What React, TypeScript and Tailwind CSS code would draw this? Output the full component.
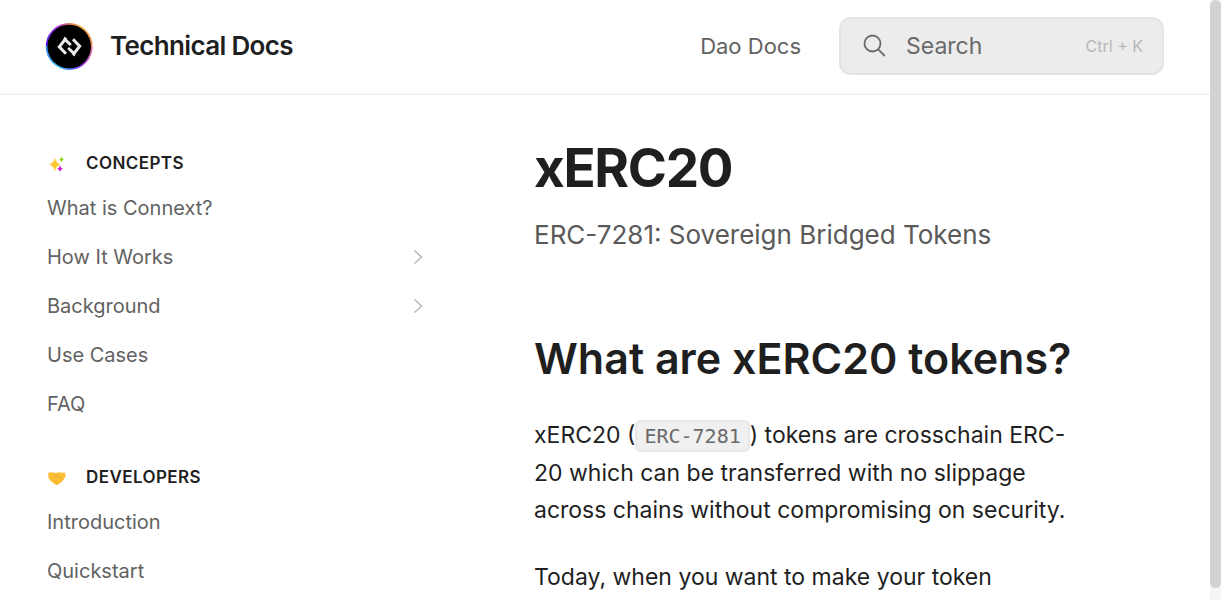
import React from "react";

type NavItem = { label: string; expandable?: boolean };

const concepts: NavItem[] = [
  { label: "What is Connext?" },
  { label: "How It Works", expandable: true },
  { label: "Background", expandable: true },
  { label: "Use Cases" },
  { label: "FAQ" },
];

const developers: NavItem[] = [{ label: "Introduction" }, { label: "Quickstart" }];

function Logo() {
  return (
    <svg viewBox="0 0 48 48" className="size-12 shrink-0" aria-hidden="true">
      <defs>
        <linearGradient id="ringTop" x1="0" y1="0" x2="1" y2="0">
          <stop offset="0" stopColor="#5a1cf0" />
          <stop offset="0.3" stopColor="#b03bd0" />
          <stop offset="0.5" stopColor="#e0784e" />
          <stop offset="0.75" stopColor="#f7b04a" />
          <stop offset="1" stopColor="#f08a5a" />
        </linearGradient>
        <linearGradient id="ringBottom" x1="0" y1="0" x2="1" y2="0">
          <stop offset="0" stopColor="#3d8bff" />
          <stop offset="0.25" stopColor="#45c4f5" />
          <stop offset="0.5" stopColor="#3f7df5" />
          <stop offset="0.75" stopColor="#8a25f5" />
          <stop offset="1" stopColor="#e27aa0" />
        </linearGradient>
      </defs>
      <path d="M.7 24.500a23.500 23.500 0 0 1 47 0z" fill="url(#ringTop)" />
      <path d="M.7 24.500a23.500 23.500 0 0 0 47 0z" fill="url(#ringBottom)" />
      <circle cx="24.200" cy="24.500" r="21.800" fill="#000" />
      <g transform="translate(.5 .5)">
        <g fill="none" stroke="#e9e9e9" strokeWidth="3">
          <path d="M20.500 31.300 13.800 24.300l5.700-7.300 5.800 5.500" />
          <path d="M27.500 16.700l6.700 7-5.700 7.300-5.800-5.500" />
        </g>
        <path d="M19 14l2.500 2-1 2.500-3-.5zM29 34l-2.500-2 1-2.500 3 .5z" fill="#e9e9e9" />
      </g>
    </svg>
  );
}

function Sparkles() {
  return (
    <svg viewBox="0 0 20 20" className="size-5" aria-hidden="true">
      <path d="M8 4.500Q8.800 9.200 13 10.500 8.800 12 8 16.500 7 12 2.800 10.500 7 9.200 8 4.500z" fill="#fdc72e" stroke="#fdc72e" strokeWidth=".5" />
      <path d="M14.500 2.500Q15 5 17.300 5.500 15 6.200 14.500 8.500 13.800 6.200 11.800 5.500 13.800 5 14.500 2.500z" fill="#8bd61c" />
      <path d="M13 11.500Q13.600 14.200 16 14.700 13.600 15.300 13 17.700 12.400 15.300 10 14.700 12.400 14.200 13 11.500z" fill="#cc18ca" />
    </svg>
  );
}

function Handshake() {
  return (
    <svg viewBox="0 0 20 20" className="size-5" aria-hidden="true">
      <path d="M1.200 4.800 4.800 4.300l4 .8 3.500-.9 3 .6 2.800-.3.500 3.800-1.800 3-2.600 3.200-4 2.500-2.300-.7-3.700-3-2.700-3z" fill="#fbbe35" />
      <path d="M9.500 5.500 7.200 8.300l1.300.9 2.500-1.200 4.600 3.800M5.500 12.500l1.700-1.500M7.500 14.300l1.500-1.700M9.500 15.800l1-1.800" fill="none" stroke="#e09a30" strokeWidth=".7" />
    </svg>
  );
}

function NavGroup({ title, icon, items }: { title: string; icon: React.ReactNode; items: NavItem[] }) {
  return (
    <section>
      <h2 className="flex h-5 items-center gap-[19px] text-[17px] font-semibold tracking-wide text-[#1f1f1f]">
        {icon}
        {title}
      </h2>
      <ul className="pt-[9px]">
        {items.map((item) => (
          <li key={item.label}>
            <a href="#" className="flex h-[49px] items-center justify-between pr-[7px] text-[20px] text-[#626262]">
              {item.label}
              {item.expandable && (
                <svg viewBox="0 0 10 16" className="h-4 w-2.5" fill="none" stroke="#b8b8b8" strokeWidth="1.5" aria-hidden="true">
                  <path d="M1.500 1.500 8.500 8l-7 6.500" />
                </svg>
              )}
            </a>
          </li>
        ))}
      </ul>
    </section>
  );
}

export default function App() {
  return (
    <div className="flex h-screen overflow-hidden bg-white font-['Inter',sans-serif] text-[#1f1f1f]">
      <div className="min-w-0 flex-1">
        <header className="flex items-center border-b-2 border-[#f2f2f2] pt-[17px] pr-[46px] pb-[18px] pl-[45px]">
          <a href="#" className="flex items-center gap-[17px] text-[26px] leading-8 font-semibold tracking-tight">
            <Logo />
            Technical Docs
          </a>
          <a href="#" className="ml-auto text-[22px] text-[#626262]">
            Dao Docs
          </a>
          <button type="button" className="ml-[38px] flex h-[58px] w-[325px] items-center rounded-xl border-2 border-[#e4e4e4] bg-[#ececec] pr-[19px] pl-[22px] text-[23px] text-[#6a6a6a]">
            <svg viewBox="0 0 24 24" className="size-6" fill="none" stroke="currentColor" strokeWidth="1.800" aria-hidden="true">
              <circle cx="9.500" cy="9.500" r="8" />
              <path d="m15.300 15.300 6.500 6.700" />
            </svg>
            <span className="ml-[19px]">Search</span>
            <kbd className="ml-auto font-['Inter',sans-serif] text-[16px] text-[#b8b8b8]">Ctrl + K</kbd>
          </button>
        </header>
        <div className="flex">
          <nav aria-label="Documentation" className="flex w-[430px] shrink-0 flex-col gap-10 pt-[59px] pl-[47px]">
            <NavGroup title="CONCEPTS" icon={<Sparkles />} items={concepts} />
            <NavGroup title="DEVELOPERS" icon={<Handshake />} items={developers} />
          </nav>
          <main className="min-w-0 flex-1 pt-[40px] pr-[142px] pl-[104px]">
            <h1 className="text-[53px] leading-[66px] font-bold tracking-tight">xERC20</h1>
            <p className="mt-[15px] text-[26px] leading-[38px] text-[#5a5a5a]">ERC-7281: Sovereign Bridged Tokens</p>
            <h2 className="mt-[75px] text-[43px] leading-[58px] font-semibold whitespace-nowrap">What are xERC20 tokens?</h2>
            <p className="mt-[30px] text-[23px] leading-[37px]">
              xERC20 (
              <code className="rounded-md border-2 border-[#e8e8e8] bg-[#f0f0f0] px-[7px] py-[2px] font-['DejaVu_Sans_Mono',monospace] text-[20px] text-[#6a6a6a]">ERC-7281</code>
              ) tokens are crosschain ERC-20 which can be transferred with no slippage across chains without compromising on security.
            </p>
            <p className="mt-[30px] text-[23px] leading-[37px]">Today, when you want to make your token</p>
          </main>
        </div>
      </div>
      <div className="flex w-[11px] shrink-0 flex-col bg-[#f5f5f5] pb-3" aria-hidden="true">
        <div className="flex-1 rounded-full bg-[#d2d2d2]" />
      </div>
    </div>
  );
}
